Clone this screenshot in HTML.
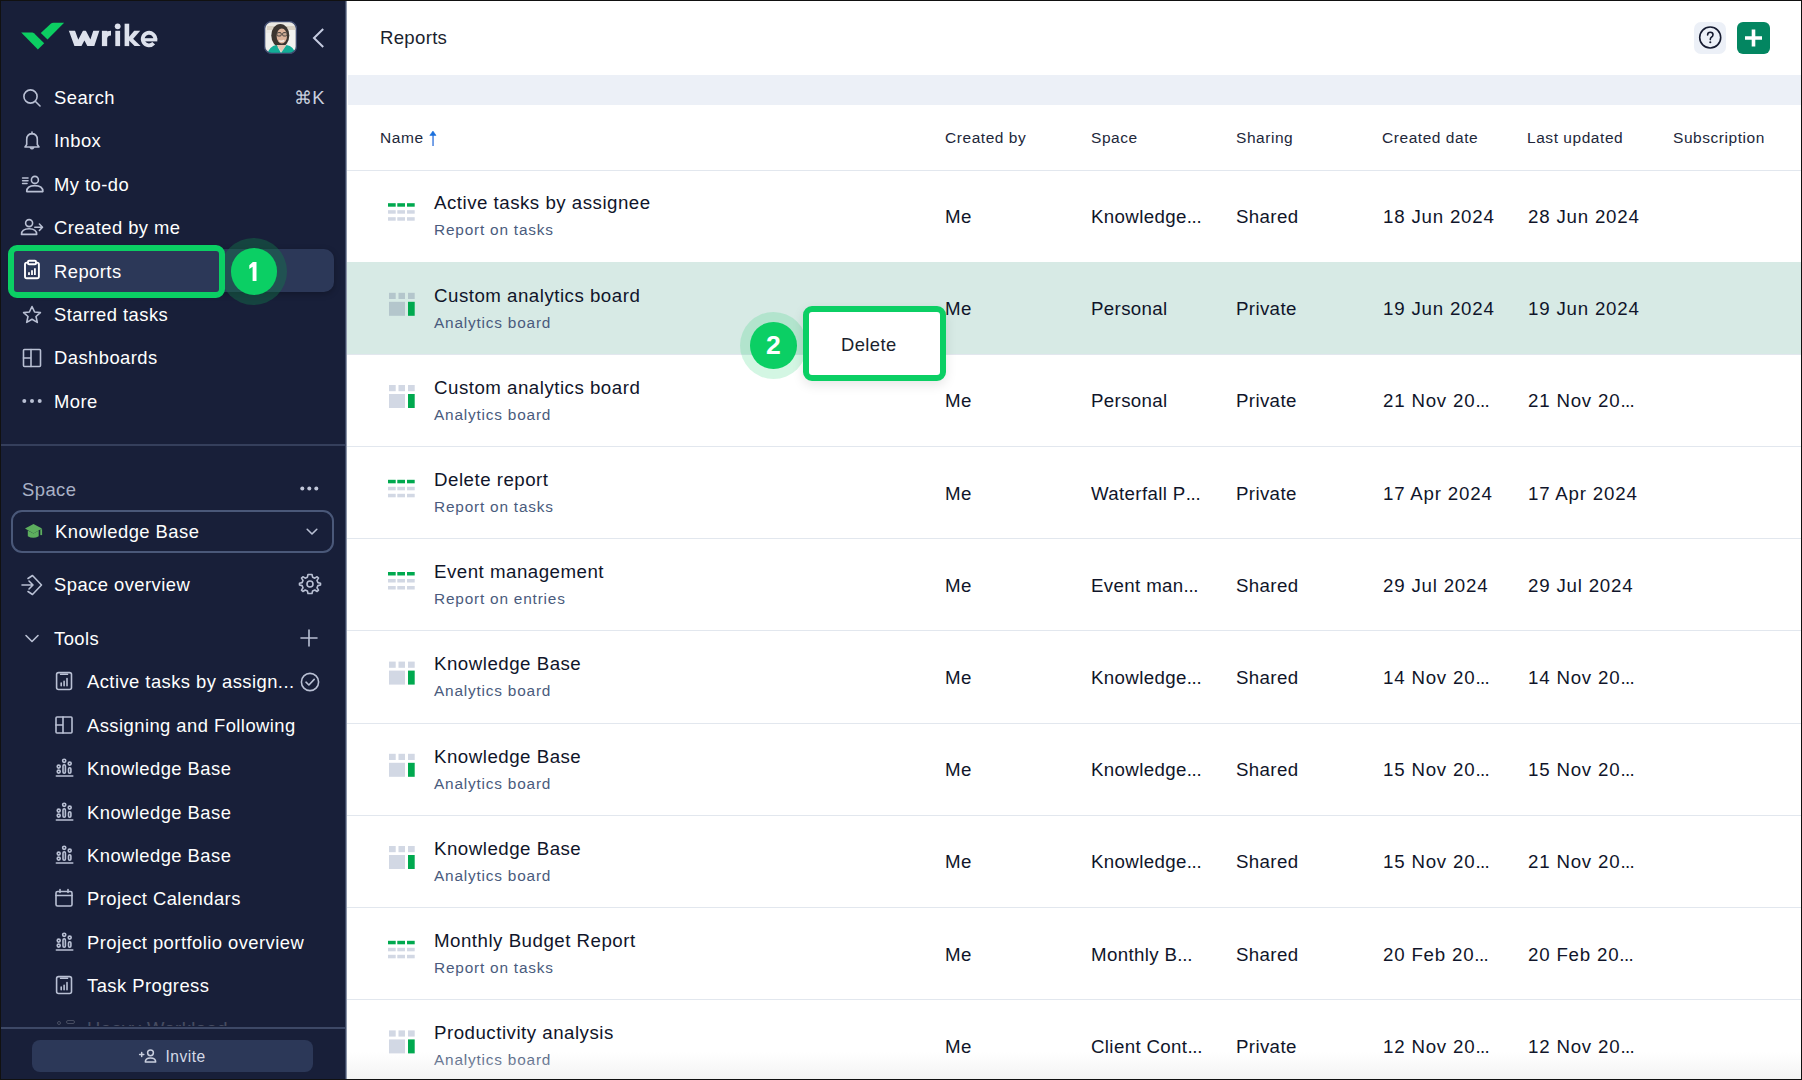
<!DOCTYPE html>
<html><head><meta charset="utf-8">
<style>
*{box-sizing:border-box;margin:0;padding:0}
html,body{width:1802px;height:1080px;overflow:hidden;background:#fff;font-family:"Liberation Sans",sans-serif}
.t{position:absolute;white-space:nowrap}
</style></head>
<body>
<div class="t" style="left:1px;top:1px;width:344px;height:1078px;background:#181f39;"></div>
<div class="t" style="left:345px;top:1px;width:1px;height:1078px;background:#3f4a66;"></div>
<div class="t" style="left:346px;top:1px;width:1px;height:1078px;background:#8d96a9;"></div>
<svg class="t" style="left:15px;top:15px;" width="150" height="45" viewBox="0 0 150 45"><path d="M6.2 17.6 L17.3 17.6 Q18.2 17.6 19 18.3 L29.2 28.2 L22.9 34.6 Z" fill="#0ccd62"/><path d="M25.8 17.9 L36 8.6 Q37 7.7 38.4 7.7 L49.1 7.7 L32.5 24.6 Z" fill="#0ccd62"/><defs><clipPath id="wc"><rect x="50" y="15.8" width="36" height="15.3"/></clipPath></defs><path clip-path="url(#wc)" d="M56.3 14 L62.8 31.8 L69.4 19.2 L76 31.8 L81.9 14" fill="none" stroke="#dde1ec" stroke-width="5.8" stroke-linejoin="miter" stroke-miterlimit="10"/><rect x="86.9" y="15.8" width="5.3" height="15.3" fill="#dde1ec"/><path d="M89.5 24 Q90 18.1 96 18.1" fill="none" stroke="#dde1ec" stroke-width="4.6"/><rect x="100.3" y="15.8" width="4.8" height="15.3" fill="#dde1ec"/><circle cx="102.7" cy="11.3" r="2.9" fill="#dde1ec"/><rect x="109.6" y="8.7" width="4.6" height="22.4" fill="#dde1ec"/><path d="M113.5 22.5 L119.2 15.8 L125.2 15.8 L116 26.3 Z" fill="#dde1ec"/><path d="M115.8 21.5 L125.6 31.1 L119.6 31.1 L113 24.6 Z" fill="#dde1ec"/><path d="M140.3 24.6 A6.3 6.3 0 1 0 138.7 28.3" fill="none" stroke="#dde1ec" stroke-width="3.8"/><rect x="129" y="23.2" width="13.3" height="3.2" fill="#dde1ec"/></svg>
<svg class="t" style="left:264px;top:21px;" width="33" height="33" viewBox="0 0 33 33"><defs><clipPath id="av"><rect x="0.5" y="0.5" width="32" height="32" rx="7"/></clipPath></defs><g clip-path="url(#av)"><rect width="33" height="33" fill="#ebe9e3"/><rect x="3" y="5" width="28" height="4" fill="#d9d1c3"/><rect x="24" y="9" width="7" height="20" fill="#f3f3f0"/><rect x="2" y="12" width="7" height="16" fill="#efefec"/><ellipse cx="16.3" cy="14.5" rx="9" ry="11.5" fill="#3b3530"/><ellipse cx="17.8" cy="15" rx="5.2" ry="7.6" fill="#dcb39b"/><rect x="12.9" y="11.6" width="4.4" height="3.4" rx="1.2" fill="#c9a892" stroke="#4a4440" stroke-width="1"/><rect x="18.6" y="11.6" width="4.4" height="3.4" rx="1.2" fill="#c9a892" stroke="#4a4440" stroke-width="1"/><path d="M15.2 19.6 Q17.8 21 20.3 19.4" stroke="#f4ece6" stroke-width="1.4" fill="none"/><path d="M12.5 24 L22.5 24 L17.5 31 Z" fill="#e6c6b3"/><path d="M3.5 34 Q4.5 25.5 12.5 24 L17 32 L22.5 24 Q30.5 25.5 31.5 34 Z" fill="#13ad97"/></g><rect x="0.6" y="0.6" width="31.8" height="31.8" rx="7" fill="none" stroke="#3e4a6e" stroke-width="1.4"/></svg>
<svg class="t" style="left:308px;top:24px;" width="20" height="28" viewBox="0 0 20 28"><path d="M15.2 5 L6 14 L15.2 23" fill="none" stroke="#c5cbe0" stroke-width="2"/></svg>
<div class="t" style="left:13px;top:249px;width:321px;height:43px;background:#2c3858;border-radius:10px;box-shadow:0 2px 6px rgba(0,0,0,0.25)"></div>
<div class="t" style="left:220.3px;top:238.1px;width:67px;height:67px;border-radius:50%;background:rgba(20,120,75,0.42)"></div>
<div class="t" style="left:230.6px;top:248.4px;width:46.4px;height:46.4px;border-radius:50%;background:#0bcf64"></div>
<svg class="t" style="left:245px;top:258px;" width="16" height="26" viewBox="0 0 16 26"><path d="M7.9 4 H11.5 V23 H7.6 V8.8 L4.3 11.1 V7.3 Z" fill="#ffffff"/></svg>
<div class="t" style="left:8px;top:245px;width:217px;height:53px;background:#2c3858;border:6px solid #0bcf64;border-radius:9px"></div>
<div class="t" style="left:54px;top:86.99px;font-size:18.4px;line-height:22.08px;color:#ffffff;letter-spacing:0.45px;font-weight:400;">Search</div>
<div class="t" style="left:54px;top:129.99px;font-size:18.4px;line-height:22.08px;color:#ffffff;letter-spacing:0.45px;font-weight:400;">Inbox</div>
<div class="t" style="left:54px;top:173.99px;font-size:18.4px;line-height:22.08px;color:#ffffff;letter-spacing:0.45px;font-weight:400;">My to-do</div>
<div class="t" style="left:54px;top:216.99px;font-size:18.4px;line-height:22.08px;color:#ffffff;letter-spacing:0.45px;font-weight:400;">Created by me</div>
<div class="t" style="left:54px;top:260.99px;font-size:18.4px;line-height:22.08px;color:#ffffff;letter-spacing:0.45px;font-weight:400;">Reports</div>
<div class="t" style="left:54px;top:303.99px;font-size:18.4px;line-height:22.08px;color:#ffffff;letter-spacing:0.45px;font-weight:400;">Starred tasks</div>
<div class="t" style="left:54px;top:346.99px;font-size:18.4px;line-height:22.08px;color:#ffffff;letter-spacing:0.45px;font-weight:400;">Dashboards</div>
<div class="t" style="left:54px;top:390.99px;font-size:18.4px;line-height:22.08px;color:#ffffff;letter-spacing:0.45px;font-weight:400;">More</div>
<div class="t" style="left:294px;top:86.99px;font-size:18.4px;line-height:22.08px;color:#c9cfdf;letter-spacing:0.2px;font-weight:400;">&#8984;K</div>
<svg class="t" style="left:20px;top:86px;" width="24" height="24" viewBox="0 0 24 24"><circle cx="10.5" cy="10.5" r="6.6" fill="none" stroke="#b9c0d4" stroke-width="1.6" stroke-linecap="round" stroke-linejoin="round"/><path d="M15.5 15.5 L20 20" fill="none" stroke="#b9c0d4" stroke-width="1.6" stroke-linecap="round" stroke-linejoin="round"/></svg>
<svg class="t" style="left:20px;top:129px;" width="24" height="24" viewBox="0 0 24 24"><path d="M5 18 H19 L17.3 15.5 V10.5 Q17.3 5 12 4.6 Q6.7 5 6.7 10.5 V15.5 Z M12 3 V4.6 M10.3 18.5 Q12 21 13.7 18.5" fill="none" stroke="#b9c0d4" stroke-width="1.6" stroke-linecap="round" stroke-linejoin="round"/></svg>
<svg class="t" style="left:20px;top:173px;" width="24" height="24" viewBox="0 0 24 24"><path d="M2.6 5 H8 M2.6 7.8 H8 M2.6 10.5 H7" fill="none" stroke="#b9c0d4" stroke-width="1.6" stroke-linecap="round" stroke-linejoin="round" stroke-width="1.7" stroke-linecap="butt"/><circle cx="14.9" cy="6.9" r="3.5" fill="none" stroke="#b9c0d4" stroke-width="1.6" stroke-linecap="round" stroke-linejoin="round"/><path d="M6.7 18.6 Q6.7 12.6 14.8 12.6 Q22.9 12.6 22.9 18.6 Z" fill="none" stroke="#b9c0d4" stroke-width="1.6" stroke-linecap="round" stroke-linejoin="round"/></svg>
<svg class="t" style="left:20px;top:216px;" width="24" height="24" viewBox="0 0 24 24"><circle cx="9.1" cy="7.1" r="3.5" fill="none" stroke="#b9c0d4" stroke-width="1.6" stroke-linecap="round" stroke-linejoin="round"/><path d="M1.5 18.4 Q1.5 12.7 9.1 12.7 Q16.7 12.7 16.7 18.4 Z" fill="none" stroke="#b9c0d4" stroke-width="1.6" stroke-linecap="round" stroke-linejoin="round"/><path d="M14.8 11.2 H22.4 M19.4 8 L22.5 11.2 L19.4 14.5" fill="none" stroke="#b9c0d4" stroke-width="1.6" stroke-linecap="round" stroke-linejoin="round" stroke-width="1.7"/></svg>
<svg class="t" style="left:20px;top:258px;" width="24" height="24" viewBox="0 0 24 24"><g fill="none" stroke="#ffffff" stroke-width="1.9" stroke-linejoin="round"><rect x="5" y="4.6" width="13.9" height="15.6" rx="1.8"/><rect x="8" y="2.8" width="8" height="3.4" rx="1" fill="#2c3858"/><path d="M9 17 V14.2 M12 17 V12.3 M14.9 17 V10.3" stroke-width="1.8"/></g></svg>
<svg class="t" style="left:20px;top:303px;" width="24" height="24" viewBox="0 0 24 24"><path d="M12 3.5 L14.6 9 L20.4 9.6 L16 13.5 L17.3 19.4 L12 16.3 L6.7 19.4 L8 13.5 L3.6 9.6 L9.4 9 Z" fill="none" stroke="#b9c0d4" stroke-width="1.6" stroke-linecap="round" stroke-linejoin="round"/></svg>
<svg class="t" style="left:20px;top:346px;" width="24" height="24" viewBox="0 0 24 24"><rect x="3.5" y="3.5" width="17" height="17" rx="1" fill="none" stroke="#b9c0d4" stroke-width="1.6" stroke-linecap="round" stroke-linejoin="round"/><path d="M11 3.5 V20.5 M3.5 12 H11" fill="none" stroke="#b9c0d4" stroke-width="1.6" stroke-linecap="round" stroke-linejoin="round"/></svg>
<svg class="t" style="left:20px;top:389px;" width="24" height="24" viewBox="0 0 24 24"><circle cx="4.3" cy="12" r="2" fill="#b9c0d4"/><circle cx="12" cy="12" r="2" fill="#b9c0d4"/><circle cx="19.7" cy="12" r="2" fill="#b9c0d4"/></svg>
<div class="t" style="left:1px;top:444px;width:344px;height:2px;background:#353f5c;"></div>
<div class="t" style="left:22px;top:478.99px;font-size:18.4px;line-height:22.08px;color:#a9b1c6;letter-spacing:0.45px;font-weight:400;">Space</div>
<svg class="t" style="left:298px;top:480px;" width="24" height="18" viewBox="0 0 24 18"><circle cx="4.3" cy="8.6" r="2" fill="#c0c6d8"/><circle cx="11.3" cy="8.6" r="2" fill="#c0c6d8"/><circle cx="18.3" cy="8.6" r="2" fill="#c0c6d8"/></svg>
<div class="t" style="left:11px;top:510px;width:323px;height:42.5px;background:transparent;border:2px solid #4a5879;border-radius:11px"></div>
<svg class="t" style="left:22px;top:519px;" width="24" height="24" viewBox="0 0 24 24"><path d="M3 9.6 L11.5 4.9 L20 9.6 L11.5 14.4 Z" fill="#5dae5e"/><path d="M5.8 11.4 L11.5 14.6 L16.7 11.5 V17.3 Q11.3 20.4 5.8 17.3 Z" fill="#5dae5e"/><rect x="18.3" y="10.2" width="1.8" height="5.9" fill="#5dae5e"/></svg>
<div class="t" style="left:55px;top:520.99px;font-size:18.4px;line-height:22.08px;color:#ffffff;letter-spacing:0.45px;font-weight:400;">Knowledge Base</div>
<svg class="t" style="left:301.5px;top:521px;" width="20" height="20" viewBox="0 0 20 20"><path d="M5.2 8.3 L10 13 L14.8 8.3" fill="none" stroke="#b9c0d4" stroke-width="1.6" stroke-linecap="round" stroke-linejoin="round" stroke-width="1.5"/></svg>
<svg class="t" style="left:19px;top:572px;" width="26" height="26" viewBox="0 0 26 26"><path d="M3 13 H14 M10 9 L14 13 L10 17" fill="none" stroke="#b9c0d4" stroke-width="1.6" stroke-linecap="round" stroke-linejoin="round"/><path d="M9 6.5 L13.5 3.5 L22.5 13 L13.5 22.5 L9 19.5" fill="none" stroke="#b9c0d4" stroke-width="1.6" stroke-linecap="round" stroke-linejoin="round"/></svg>
<div class="t" style="left:54px;top:573.99px;font-size:18.4px;line-height:22.08px;color:#ffffff;letter-spacing:0.45px;font-weight:400;">Space overview</div>
<svg class="t" style="left:298px;top:572px;" width="24" height="24" viewBox="0 0 24 24"><circle cx="12" cy="12" r="3" fill="none" stroke="#b9c0d4" stroke-width="1.6" stroke-linecap="round" stroke-linejoin="round"/><path d="M12 2.5 L14 2.5 L14.6 5.2 L16.8 6.2 L19.1 4.7 L20.5 6.1 L19 8.4 L19.9 10.6 L22.5 11.2 V13 L19.9 13.6 L19 15.8 L20.5 18.1 L19.1 19.5 L16.8 18 L14.6 18.9 L14 21.5 H10 L9.4 18.9 L7.2 18 L4.9 19.5 L3.5 18.1 L5 15.8 L4.1 13.6 L1.5 13 V11.2 L4.1 10.6 L5 8.4 L3.5 6.1 L4.9 4.7 L7.2 6.2 L9.4 5.2 L10 2.5 Z" fill="none" stroke="#b9c0d4" stroke-width="1.6" stroke-linecap="round" stroke-linejoin="round"/></svg>
<svg class="t" style="left:22px;top:628px;" width="20" height="20" viewBox="0 0 20 20"><path d="M4 7.5 L10 13.5 L16 7.5" fill="none" stroke="#b9c0d4" stroke-width="1.6" stroke-linecap="round" stroke-linejoin="round"/></svg>
<div class="t" style="left:54px;top:627.99px;font-size:18.4px;line-height:22.08px;color:#ffffff;letter-spacing:0.45px;font-weight:400;">Tools</div>
<svg class="t" style="left:298px;top:627px;" width="22" height="22" viewBox="0 0 22 22"><path d="M11 3 V19 M3 11 H19" fill="none" stroke="#b9c0d4" stroke-width="1.6" stroke-linecap="round" stroke-linejoin="round" stroke-width="1.7"/></svg>
<div class="t" style="left:87px;top:670.99px;font-size:18.4px;line-height:22.08px;color:#ffffff;letter-spacing:0.45px;font-weight:400;">Active tasks by assign...</div>
<svg class="t" style="left:53px;top:670px;" width="22" height="22" viewBox="0 0 22 22"><rect x="3.6" y="2.6" width="14.9" height="16.9" rx="2" fill="none" stroke="#b9c0d4" stroke-width="1.6" stroke-linecap="round" stroke-linejoin="round"/><rect x="6.9" y="3.4" width="8.3" height="1.7" rx="0.6" fill="#b9c0d4"/><path d="M8.2 15.8 V13 M11.1 15.8 V11.2 M14 15.8 V8.5" fill="none" stroke="#b9c0d4" stroke-width="1.6" stroke-linecap="round" stroke-linejoin="round" stroke-width="1.7" stroke-linecap="butt"/></svg>
<svg class="t" style="left:298px;top:670px;" width="24" height="24" viewBox="0 0 24 24"><circle cx="12" cy="12" r="8.6" fill="none" stroke="#b9c0d4" stroke-width="1.6" stroke-linecap="round" stroke-linejoin="round"/><path d="M8 12.2 L10.9 15 L16.2 9.4" fill="none" stroke="#b9c0d4" stroke-width="1.6" stroke-linecap="round" stroke-linejoin="round"/></svg>
<div class="t" style="left:87px;top:714.99px;font-size:18.4px;line-height:22.08px;color:#ffffff;letter-spacing:0.45px;font-weight:400;">Assigning and Following</div>
<svg class="t" style="left:53px;top:714px;" width="22" height="22" viewBox="0 0 22 22"><rect x="3" y="3" width="16" height="16" rx="1" fill="none" stroke="#b9c0d4" stroke-width="1.6" stroke-linecap="round" stroke-linejoin="round"/><path d="M10 3 V19 M3 11 H10" fill="none" stroke="#b9c0d4" stroke-width="1.6" stroke-linecap="round" stroke-linejoin="round"/></svg>
<div class="t" style="left:87px;top:757.99px;font-size:18.4px;line-height:22.08px;color:#ffffff;letter-spacing:0.45px;font-weight:400;">Knowledge Base</div>
<svg class="t" style="left:53px;top:757px;" width="22" height="22" viewBox="0 0 22 22"><g fill="none" stroke="#b9c0d4" stroke-width="1.6" stroke-linecap="round" stroke-linejoin="round" stroke-width="1.3"><circle cx="5.7" cy="9.6" r="1.5"/><circle cx="5.7" cy="14.6" r="1.5"/><circle cx="11.2" cy="3.8" r="1.6"/><rect x="10" y="7.8" width="2.4" height="8.5" rx="1.2"/><circle cx="16.7" cy="6.6" r="1.5"/><rect x="15.5" y="10.8" width="2.4" height="5.5" rx="1.2"/><path d="M3.3 19.1 H19.8" stroke-width="1.5"/></g></svg>
<div class="t" style="left:87px;top:801.99px;font-size:18.4px;line-height:22.08px;color:#ffffff;letter-spacing:0.45px;font-weight:400;">Knowledge Base</div>
<svg class="t" style="left:53px;top:801px;" width="22" height="22" viewBox="0 0 22 22"><g fill="none" stroke="#b9c0d4" stroke-width="1.6" stroke-linecap="round" stroke-linejoin="round" stroke-width="1.3"><circle cx="5.7" cy="9.6" r="1.5"/><circle cx="5.7" cy="14.6" r="1.5"/><circle cx="11.2" cy="3.8" r="1.6"/><rect x="10" y="7.8" width="2.4" height="8.5" rx="1.2"/><circle cx="16.7" cy="6.6" r="1.5"/><rect x="15.5" y="10.8" width="2.4" height="5.5" rx="1.2"/><path d="M3.3 19.1 H19.8" stroke-width="1.5"/></g></svg>
<div class="t" style="left:87px;top:844.99px;font-size:18.4px;line-height:22.08px;color:#ffffff;letter-spacing:0.45px;font-weight:400;">Knowledge Base</div>
<svg class="t" style="left:53px;top:844px;" width="22" height="22" viewBox="0 0 22 22"><g fill="none" stroke="#b9c0d4" stroke-width="1.6" stroke-linecap="round" stroke-linejoin="round" stroke-width="1.3"><circle cx="5.7" cy="9.6" r="1.5"/><circle cx="5.7" cy="14.6" r="1.5"/><circle cx="11.2" cy="3.8" r="1.6"/><rect x="10" y="7.8" width="2.4" height="8.5" rx="1.2"/><circle cx="16.7" cy="6.6" r="1.5"/><rect x="15.5" y="10.8" width="2.4" height="5.5" rx="1.2"/><path d="M3.3 19.1 H19.8" stroke-width="1.5"/></g></svg>
<div class="t" style="left:87px;top:887.99px;font-size:18.4px;line-height:22.08px;color:#ffffff;letter-spacing:0.45px;font-weight:400;">Project Calendars</div>
<svg class="t" style="left:53px;top:887px;" width="22" height="22" viewBox="0 0 22 22"><rect x="3" y="4.5" width="16" height="14.5" rx="1.5" fill="none" stroke="#b9c0d4" stroke-width="1.6" stroke-linecap="round" stroke-linejoin="round"/><path d="M3 8.5 H19 M7 2.5 V5.5 M15 2.5 V5.5" fill="none" stroke="#b9c0d4" stroke-width="1.6" stroke-linecap="round" stroke-linejoin="round"/></svg>
<div class="t" style="left:87px;top:931.99px;font-size:18.4px;line-height:22.08px;color:#ffffff;letter-spacing:0.45px;font-weight:400;">Project portfolio overview</div>
<svg class="t" style="left:53px;top:931px;" width="22" height="22" viewBox="0 0 22 22"><g fill="none" stroke="#b9c0d4" stroke-width="1.6" stroke-linecap="round" stroke-linejoin="round" stroke-width="1.3"><circle cx="5.7" cy="9.6" r="1.5"/><circle cx="5.7" cy="14.6" r="1.5"/><circle cx="11.2" cy="3.8" r="1.6"/><rect x="10" y="7.8" width="2.4" height="8.5" rx="1.2"/><circle cx="16.7" cy="6.6" r="1.5"/><rect x="15.5" y="10.8" width="2.4" height="5.5" rx="1.2"/><path d="M3.3 19.1 H19.8" stroke-width="1.5"/></g></svg>
<div class="t" style="left:87px;top:974.99px;font-size:18.4px;line-height:22.08px;color:#ffffff;letter-spacing:0.45px;font-weight:400;">Task Progress</div>
<svg class="t" style="left:53px;top:974px;" width="22" height="22" viewBox="0 0 22 22"><rect x="3.6" y="2.6" width="14.9" height="16.9" rx="2" fill="none" stroke="#b9c0d4" stroke-width="1.6" stroke-linecap="round" stroke-linejoin="round"/><rect x="6.9" y="3.4" width="8.3" height="1.7" rx="0.6" fill="#b9c0d4"/><path d="M8.2 15.8 V13 M11.1 15.8 V11.2 M14 15.8 V8.5" fill="none" stroke="#b9c0d4" stroke-width="1.6" stroke-linecap="round" stroke-linejoin="round" stroke-width="1.7" stroke-linecap="butt"/></svg>
<div class="t" style="left:1px;top:1005px;width:344px;height:20.5px;overflow:hidden;opacity:0.2"><div class="t" style="left:86px;top:13px;font-size:18.4px;color:#fff;letter-spacing:0.45px">Heavy Workload</div><div class="t" style="left:55.5px;top:15.5px;width:4px;height:4px;border-radius:50%;border:1.3px solid #fff"></div><div class="t" style="left:64.5px;top:15px;width:9px;height:4px;border-radius:2px;border:1.3px solid #fff"></div></div>
<div class="t" style="left:1px;top:1027px;width:344px;height:1.6px;background:#3d4866;"></div>
<div class="t" style="left:32px;top:1040px;width:281px;height:32px;background:#2c3858;border-radius:8px"></div>
<svg class="t" style="left:137px;top:1045px;" width="24" height="22" viewBox="0 0 24 22"><g fill="none" stroke="#c9cfde" stroke-width="1.5" stroke-linecap="round" stroke-linejoin="round"><path d="M2.6 9.5 H6.8 M4.7 7.4 V11.6"/><circle cx="13.5" cy="7.8" r="2.9"/><path d="M8.3 17 Q8.3 12.9 13.5 12.9 Q18.7 12.9 18.7 17 Z"/></g></svg>
<div class="t" style="left:165.5px;top:1047.62px;font-size:15.6px;line-height:18.72px;color:#d4d9e6;letter-spacing:0.5px;font-weight:400;">Invite</div>
<div class="t" style="left:347px;top:1px;width:1454px;height:1078px;background:#ffffff;"></div>
<div class="t" style="left:380px;top:26.87px;font-size:18.6px;line-height:22.32px;color:#1b1f2e;letter-spacing:0.3px;font-weight:400;">Reports</div>
<div class="t" style="left:1694px;top:21.5px;width:32px;height:32px;background:#ecf0f7;border-radius:7px"></div>
<svg class="t" style="left:1694px;top:21px;" width="32" height="32" viewBox="0 0 32 32"><circle cx="16.2" cy="16.5" r="10.5" fill="none" stroke="#161b30" stroke-width="1.6"/><path d="M13.6 13.9 Q13.6 11.3 16.3 11.3 Q19 11.3 19 13.8 Q19 15.3 17.4 16.2 Q16.3 16.9 16.3 18.6" fill="none" stroke="#161b30" stroke-width="1.6" stroke-linecap="round"/><circle cx="16.3" cy="21.3" r="1.05" fill="#161b30"/></svg>
<div class="t" style="left:1737px;top:22px;width:33px;height:32px;background:#038661;border-radius:6px"></div>
<svg class="t" style="left:1737px;top:22px;" width="33" height="32" viewBox="0 0 33 32"><path d="M16.5 7.5 V24.5 M8 16 H25" fill="none" stroke="#fff" stroke-width="3.6"/></svg>
<div class="t" style="left:348px;top:75px;width:1453px;height:30px;background:#ecf0f7;"></div>
<div class="t" style="left:380px;top:129.28px;font-size:15.5px;line-height:18.6px;color:#22273a;letter-spacing:0.55px;font-weight:400;">Name</div>
<svg class="t" style="left:427px;top:127px;" width="12" height="20" viewBox="0 0 12 20"><rect x="5.1" y="7" width="1.9" height="12" fill="#6f9de6"/><path d="M2.8 8.4 L9 8.4 L5.95 4.1 Z" fill="#1a6fdc" stroke="#1a6fdc" stroke-width="0.6" stroke-linejoin="round"/></svg>
<div class="t" style="left:945px;top:129.28px;font-size:15.5px;line-height:18.6px;color:#22273a;letter-spacing:0.55px;font-weight:400;">Created by</div>
<div class="t" style="left:1091px;top:129.28px;font-size:15.5px;line-height:18.6px;color:#22273a;letter-spacing:0.55px;font-weight:400;">Space</div>
<div class="t" style="left:1236px;top:129.28px;font-size:15.5px;line-height:18.6px;color:#22273a;letter-spacing:0.55px;font-weight:400;">Sharing</div>
<div class="t" style="left:1382px;top:129.28px;font-size:15.5px;line-height:18.6px;color:#22273a;letter-spacing:0.55px;font-weight:400;">Created date</div>
<div class="t" style="left:1527px;top:129.28px;font-size:15.5px;line-height:18.6px;color:#22273a;letter-spacing:0.55px;font-weight:400;">Last updated</div>
<div class="t" style="left:1673px;top:129.28px;font-size:15.5px;line-height:18.6px;color:#22273a;letter-spacing:0.55px;font-weight:400;">Subscription</div>
<div class="t" style="left:347px;top:170px;width:1454px;height:1px;background:#e2e7ee;"></div>
<div class="t" style="left:347px;top:262px;width:1454px;height:1px;background:#e2e7ee;"></div>
<div class="t" style="left:434px;top:192.42px;font-size:18.7px;line-height:22.44px;color:#10152a;letter-spacing:0.5px;font-weight:400;">Active tasks by assignee</div>
<div class="t" style="left:434px;top:221.34px;font-size:15.4px;line-height:18.48px;color:#4a5b7d;letter-spacing:0.8px;font-weight:400;">Report on tasks</div>
<div class="t" style="left:945px;top:205.92px;font-size:18.7px;line-height:22.44px;color:#10152a;letter-spacing:0.36px;font-weight:400;">Me</div>
<div class="t" style="left:1091px;top:205.92px;font-size:18.7px;line-height:22.44px;color:#10152a;letter-spacing:0.36px;font-weight:400;">Knowledge<span style="letter-spacing:-0.3px">...</span></div>
<div class="t" style="left:1236px;top:205.92px;font-size:18.7px;line-height:22.44px;color:#10152a;letter-spacing:0.36px;font-weight:400;">Shared</div>
<div class="t" style="left:1383px;top:205.92px;font-size:18.7px;line-height:22.44px;color:#10152a;letter-spacing:0.8px;font-weight:400;">18 Jun 2024</div>
<div class="t" style="left:1528px;top:205.92px;font-size:18.7px;line-height:22.44px;color:#10152a;letter-spacing:0.8px;font-weight:400;">28 Jun 2024</div>
<svg class="t" style="left:386px;top:198px;" width="32" height="28" viewBox="0 0 32 28"><rect x="2.00" y="5.20" width="7.7" height="3.5" fill="#00a94f"/><rect x="2.00" y="12.20" width="7.7" height="3.5" fill="#d2d8e4"/><rect x="2.00" y="19.20" width="7.7" height="3.5" fill="#d2d8e4"/><rect x="11.30" y="5.20" width="7.7" height="3.5" fill="#00a94f"/><rect x="11.30" y="12.20" width="7.7" height="3.5" fill="#d2d8e4"/><rect x="11.30" y="19.20" width="7.7" height="3.5" fill="#d2d8e4"/><rect x="21.00" y="5.20" width="7.7" height="3.5" fill="#00a94f"/><rect x="21.00" y="12.20" width="7.7" height="3.5" fill="#d2d8e4"/><rect x="21.00" y="19.20" width="7.7" height="3.5" fill="#d2d8e4"/></svg>
<div class="t" style="left:347px;top:262px;width:1454px;height:92px;background:#d7eae5;"></div>
<div class="t" style="left:347px;top:354px;width:1454px;height:1px;background:#e2e7ee;"></div>
<div class="t" style="left:434px;top:284.62px;font-size:18.7px;line-height:22.44px;color:#10152a;letter-spacing:0.5px;font-weight:400;">Custom analytics board</div>
<div class="t" style="left:434px;top:313.54px;font-size:15.4px;line-height:18.48px;color:#4a5b7d;letter-spacing:0.8px;font-weight:400;">Analytics board</div>
<div class="t" style="left:945px;top:298.12px;font-size:18.7px;line-height:22.44px;color:#10152a;letter-spacing:0.36px;font-weight:400;">Me</div>
<div class="t" style="left:1091px;top:298.12px;font-size:18.7px;line-height:22.44px;color:#10152a;letter-spacing:0.36px;font-weight:400;">Personal</div>
<div class="t" style="left:1236px;top:298.12px;font-size:18.7px;line-height:22.44px;color:#10152a;letter-spacing:0.36px;font-weight:400;">Private</div>
<div class="t" style="left:1383px;top:298.12px;font-size:18.7px;line-height:22.44px;color:#10152a;letter-spacing:0.8px;font-weight:400;">19 Jun 2024</div>
<div class="t" style="left:1528px;top:298.12px;font-size:18.7px;line-height:22.44px;color:#10152a;letter-spacing:0.8px;font-weight:400;">19 Jun 2024</div>
<svg class="t" style="left:386px;top:290px;" width="32" height="28" viewBox="0 0 32 28"><rect x="3" y="2.80" width="6.7" height="6.2" fill="#b4c6cc"/><rect x="12.5" y="2.80" width="6.5" height="6.2" fill="#b4c6cc"/><rect x="22" y="2.80" width="6.7" height="6.2" fill="#b4c6cc"/><rect x="3" y="11.80" width="16" height="14" fill="#b4c6cc"/><rect x="22" y="11.80" width="6.7" height="14" fill="#00a94f"/></svg>
<div class="t" style="left:347px;top:446px;width:1454px;height:1px;background:#e2e7ee;"></div>
<div class="t" style="left:434px;top:376.82px;font-size:18.7px;line-height:22.44px;color:#10152a;letter-spacing:0.5px;font-weight:400;">Custom analytics board</div>
<div class="t" style="left:434px;top:405.74px;font-size:15.4px;line-height:18.48px;color:#4a5b7d;letter-spacing:0.8px;font-weight:400;">Analytics board</div>
<div class="t" style="left:945px;top:390.32px;font-size:18.7px;line-height:22.44px;color:#10152a;letter-spacing:0.36px;font-weight:400;">Me</div>
<div class="t" style="left:1091px;top:390.32px;font-size:18.7px;line-height:22.44px;color:#10152a;letter-spacing:0.36px;font-weight:400;">Personal</div>
<div class="t" style="left:1236px;top:390.32px;font-size:18.7px;line-height:22.44px;color:#10152a;letter-spacing:0.36px;font-weight:400;">Private</div>
<div class="t" style="left:1383px;top:390.32px;font-size:18.7px;line-height:22.44px;color:#10152a;letter-spacing:0.8px;font-weight:400;">21 Nov 20<span style="letter-spacing:-0.6px">...</span></div>
<div class="t" style="left:1528px;top:390.32px;font-size:18.7px;line-height:22.44px;color:#10152a;letter-spacing:0.8px;font-weight:400;">21 Nov 20<span style="letter-spacing:-0.6px">...</span></div>
<svg class="t" style="left:386px;top:382px;" width="32" height="28" viewBox="0 0 32 28"><rect x="3" y="3.00" width="6.7" height="6.2" fill="#d2d8e4"/><rect x="12.5" y="3.00" width="6.5" height="6.2" fill="#d2d8e4"/><rect x="22" y="3.00" width="6.7" height="6.2" fill="#d2d8e4"/><rect x="3" y="12.00" width="16" height="14" fill="#d2d8e4"/><rect x="22" y="12.00" width="6.7" height="14" fill="#00a94f"/></svg>
<div class="t" style="left:347px;top:538px;width:1454px;height:1px;background:#e2e7ee;"></div>
<div class="t" style="left:434px;top:469.02px;font-size:18.7px;line-height:22.44px;color:#10152a;letter-spacing:0.5px;font-weight:400;">Delete report</div>
<div class="t" style="left:434px;top:497.94px;font-size:15.4px;line-height:18.48px;color:#4a5b7d;letter-spacing:0.8px;font-weight:400;">Report on tasks</div>
<div class="t" style="left:945px;top:482.52px;font-size:18.7px;line-height:22.44px;color:#10152a;letter-spacing:0.36px;font-weight:400;">Me</div>
<div class="t" style="left:1091px;top:482.52px;font-size:18.7px;line-height:22.44px;color:#10152a;letter-spacing:0.36px;font-weight:400;">Waterfall P<span style="letter-spacing:-0.3px">...</span></div>
<div class="t" style="left:1236px;top:482.52px;font-size:18.7px;line-height:22.44px;color:#10152a;letter-spacing:0.36px;font-weight:400;">Private</div>
<div class="t" style="left:1383px;top:482.52px;font-size:18.7px;line-height:22.44px;color:#10152a;letter-spacing:0.8px;font-weight:400;">17 Apr 2024</div>
<div class="t" style="left:1528px;top:482.52px;font-size:18.7px;line-height:22.44px;color:#10152a;letter-spacing:0.8px;font-weight:400;">17 Apr 2024</div>
<svg class="t" style="left:386px;top:474px;" width="32" height="28" viewBox="0 0 32 28"><rect x="2.00" y="5.80" width="7.7" height="3.5" fill="#00a94f"/><rect x="2.00" y="12.80" width="7.7" height="3.5" fill="#d2d8e4"/><rect x="2.00" y="19.80" width="7.7" height="3.5" fill="#d2d8e4"/><rect x="11.30" y="5.80" width="7.7" height="3.5" fill="#00a94f"/><rect x="11.30" y="12.80" width="7.7" height="3.5" fill="#d2d8e4"/><rect x="11.30" y="19.80" width="7.7" height="3.5" fill="#d2d8e4"/><rect x="21.00" y="5.80" width="7.7" height="3.5" fill="#00a94f"/><rect x="21.00" y="12.80" width="7.7" height="3.5" fill="#d2d8e4"/><rect x="21.00" y="19.80" width="7.7" height="3.5" fill="#d2d8e4"/></svg>
<div class="t" style="left:347px;top:630px;width:1454px;height:1px;background:#e2e7ee;"></div>
<div class="t" style="left:434px;top:561.22px;font-size:18.7px;line-height:22.44px;color:#10152a;letter-spacing:0.5px;font-weight:400;">Event management</div>
<div class="t" style="left:434px;top:590.14px;font-size:15.4px;line-height:18.48px;color:#4a5b7d;letter-spacing:0.8px;font-weight:400;">Report on entries</div>
<div class="t" style="left:945px;top:574.72px;font-size:18.7px;line-height:22.44px;color:#10152a;letter-spacing:0.36px;font-weight:400;">Me</div>
<div class="t" style="left:1091px;top:574.72px;font-size:18.7px;line-height:22.44px;color:#10152a;letter-spacing:0.36px;font-weight:400;">Event man<span style="letter-spacing:-0.3px">...</span></div>
<div class="t" style="left:1236px;top:574.72px;font-size:18.7px;line-height:22.44px;color:#10152a;letter-spacing:0.36px;font-weight:400;">Shared</div>
<div class="t" style="left:1383px;top:574.72px;font-size:18.7px;line-height:22.44px;color:#10152a;letter-spacing:0.8px;font-weight:400;">29 Jul 2024</div>
<div class="t" style="left:1528px;top:574.72px;font-size:18.7px;line-height:22.44px;color:#10152a;letter-spacing:0.8px;font-weight:400;">29 Jul 2024</div>
<svg class="t" style="left:386px;top:566px;" width="32" height="28" viewBox="0 0 32 28"><rect x="2.00" y="6.00" width="7.7" height="3.5" fill="#00a94f"/><rect x="2.00" y="13.00" width="7.7" height="3.5" fill="#d2d8e4"/><rect x="2.00" y="20.00" width="7.7" height="3.5" fill="#d2d8e4"/><rect x="11.30" y="6.00" width="7.7" height="3.5" fill="#00a94f"/><rect x="11.30" y="13.00" width="7.7" height="3.5" fill="#d2d8e4"/><rect x="11.30" y="20.00" width="7.7" height="3.5" fill="#d2d8e4"/><rect x="21.00" y="6.00" width="7.7" height="3.5" fill="#00a94f"/><rect x="21.00" y="13.00" width="7.7" height="3.5" fill="#d2d8e4"/><rect x="21.00" y="20.00" width="7.7" height="3.5" fill="#d2d8e4"/></svg>
<div class="t" style="left:347px;top:723px;width:1454px;height:1px;background:#e2e7ee;"></div>
<div class="t" style="left:434px;top:653.42px;font-size:18.7px;line-height:22.44px;color:#10152a;letter-spacing:0.5px;font-weight:400;">Knowledge Base</div>
<div class="t" style="left:434px;top:682.34px;font-size:15.4px;line-height:18.48px;color:#4a5b7d;letter-spacing:0.8px;font-weight:400;">Analytics board</div>
<div class="t" style="left:945px;top:666.92px;font-size:18.7px;line-height:22.44px;color:#10152a;letter-spacing:0.36px;font-weight:400;">Me</div>
<div class="t" style="left:1091px;top:666.92px;font-size:18.7px;line-height:22.44px;color:#10152a;letter-spacing:0.36px;font-weight:400;">Knowledge<span style="letter-spacing:-0.3px">...</span></div>
<div class="t" style="left:1236px;top:666.92px;font-size:18.7px;line-height:22.44px;color:#10152a;letter-spacing:0.36px;font-weight:400;">Shared</div>
<div class="t" style="left:1383px;top:666.92px;font-size:18.7px;line-height:22.44px;color:#10152a;letter-spacing:0.8px;font-weight:400;">14 Nov 20<span style="letter-spacing:-0.6px">...</span></div>
<div class="t" style="left:1528px;top:666.92px;font-size:18.7px;line-height:22.44px;color:#10152a;letter-spacing:0.8px;font-weight:400;">14 Nov 20<span style="letter-spacing:-0.6px">...</span></div>
<svg class="t" style="left:386px;top:659px;" width="32" height="28" viewBox="0 0 32 28"><rect x="3" y="2.60" width="6.7" height="6.2" fill="#d2d8e4"/><rect x="12.5" y="2.60" width="6.5" height="6.2" fill="#d2d8e4"/><rect x="22" y="2.60" width="6.7" height="6.2" fill="#d2d8e4"/><rect x="3" y="11.60" width="16" height="14" fill="#d2d8e4"/><rect x="22" y="11.60" width="6.7" height="14" fill="#00a94f"/></svg>
<div class="t" style="left:347px;top:815px;width:1454px;height:1px;background:#e2e7ee;"></div>
<div class="t" style="left:434px;top:745.62px;font-size:18.7px;line-height:22.44px;color:#10152a;letter-spacing:0.5px;font-weight:400;">Knowledge Base</div>
<div class="t" style="left:434px;top:774.54px;font-size:15.4px;line-height:18.48px;color:#4a5b7d;letter-spacing:0.8px;font-weight:400;">Analytics board</div>
<div class="t" style="left:945px;top:759.12px;font-size:18.7px;line-height:22.44px;color:#10152a;letter-spacing:0.36px;font-weight:400;">Me</div>
<div class="t" style="left:1091px;top:759.12px;font-size:18.7px;line-height:22.44px;color:#10152a;letter-spacing:0.36px;font-weight:400;">Knowledge<span style="letter-spacing:-0.3px">...</span></div>
<div class="t" style="left:1236px;top:759.12px;font-size:18.7px;line-height:22.44px;color:#10152a;letter-spacing:0.36px;font-weight:400;">Shared</div>
<div class="t" style="left:1383px;top:759.12px;font-size:18.7px;line-height:22.44px;color:#10152a;letter-spacing:0.8px;font-weight:400;">15 Nov 20<span style="letter-spacing:-0.6px">...</span></div>
<div class="t" style="left:1528px;top:759.12px;font-size:18.7px;line-height:22.44px;color:#10152a;letter-spacing:0.8px;font-weight:400;">15 Nov 20<span style="letter-spacing:-0.6px">...</span></div>
<svg class="t" style="left:386px;top:751px;" width="32" height="28" viewBox="0 0 32 28"><rect x="3" y="2.80" width="6.7" height="6.2" fill="#d2d8e4"/><rect x="12.5" y="2.80" width="6.5" height="6.2" fill="#d2d8e4"/><rect x="22" y="2.80" width="6.7" height="6.2" fill="#d2d8e4"/><rect x="3" y="11.80" width="16" height="14" fill="#d2d8e4"/><rect x="22" y="11.80" width="6.7" height="14" fill="#00a94f"/></svg>
<div class="t" style="left:347px;top:907px;width:1454px;height:1px;background:#e2e7ee;"></div>
<div class="t" style="left:434px;top:837.82px;font-size:18.7px;line-height:22.44px;color:#10152a;letter-spacing:0.5px;font-weight:400;">Knowledge Base</div>
<div class="t" style="left:434px;top:866.74px;font-size:15.4px;line-height:18.48px;color:#4a5b7d;letter-spacing:0.8px;font-weight:400;">Analytics board</div>
<div class="t" style="left:945px;top:851.32px;font-size:18.7px;line-height:22.44px;color:#10152a;letter-spacing:0.36px;font-weight:400;">Me</div>
<div class="t" style="left:1091px;top:851.32px;font-size:18.7px;line-height:22.44px;color:#10152a;letter-spacing:0.36px;font-weight:400;">Knowledge<span style="letter-spacing:-0.3px">...</span></div>
<div class="t" style="left:1236px;top:851.32px;font-size:18.7px;line-height:22.44px;color:#10152a;letter-spacing:0.36px;font-weight:400;">Shared</div>
<div class="t" style="left:1383px;top:851.32px;font-size:18.7px;line-height:22.44px;color:#10152a;letter-spacing:0.8px;font-weight:400;">15 Nov 20<span style="letter-spacing:-0.6px">...</span></div>
<div class="t" style="left:1528px;top:851.32px;font-size:18.7px;line-height:22.44px;color:#10152a;letter-spacing:0.8px;font-weight:400;">21 Nov 20<span style="letter-spacing:-0.6px">...</span></div>
<svg class="t" style="left:386px;top:843px;" width="32" height="28" viewBox="0 0 32 28"><rect x="3" y="3.00" width="6.7" height="6.2" fill="#d2d8e4"/><rect x="12.5" y="3.00" width="6.5" height="6.2" fill="#d2d8e4"/><rect x="22" y="3.00" width="6.7" height="6.2" fill="#d2d8e4"/><rect x="3" y="12.00" width="16" height="14" fill="#d2d8e4"/><rect x="22" y="12.00" width="6.7" height="14" fill="#00a94f"/></svg>
<div class="t" style="left:347px;top:999px;width:1454px;height:1px;background:#e2e7ee;"></div>
<div class="t" style="left:434px;top:930.02px;font-size:18.7px;line-height:22.44px;color:#10152a;letter-spacing:0.5px;font-weight:400;">Monthly Budget Report</div>
<div class="t" style="left:434px;top:958.94px;font-size:15.4px;line-height:18.48px;color:#4a5b7d;letter-spacing:0.8px;font-weight:400;">Report on tasks</div>
<div class="t" style="left:945px;top:943.52px;font-size:18.7px;line-height:22.44px;color:#10152a;letter-spacing:0.36px;font-weight:400;">Me</div>
<div class="t" style="left:1091px;top:943.52px;font-size:18.7px;line-height:22.44px;color:#10152a;letter-spacing:0.36px;font-weight:400;">Monthly B<span style="letter-spacing:-0.3px">...</span></div>
<div class="t" style="left:1236px;top:943.52px;font-size:18.7px;line-height:22.44px;color:#10152a;letter-spacing:0.36px;font-weight:400;">Shared</div>
<div class="t" style="left:1383px;top:943.52px;font-size:18.7px;line-height:22.44px;color:#10152a;letter-spacing:0.8px;font-weight:400;">20 Feb 20<span style="letter-spacing:-0.6px">...</span></div>
<div class="t" style="left:1528px;top:943.52px;font-size:18.7px;line-height:22.44px;color:#10152a;letter-spacing:0.8px;font-weight:400;">20 Feb 20<span style="letter-spacing:-0.6px">...</span></div>
<svg class="t" style="left:386px;top:935px;" width="32" height="28" viewBox="0 0 32 28"><rect x="2.00" y="5.80" width="7.7" height="3.5" fill="#00a94f"/><rect x="2.00" y="12.80" width="7.7" height="3.5" fill="#d2d8e4"/><rect x="2.00" y="19.80" width="7.7" height="3.5" fill="#d2d8e4"/><rect x="11.30" y="5.80" width="7.7" height="3.5" fill="#00a94f"/><rect x="11.30" y="12.80" width="7.7" height="3.5" fill="#d2d8e4"/><rect x="11.30" y="19.80" width="7.7" height="3.5" fill="#d2d8e4"/><rect x="21.00" y="5.80" width="7.7" height="3.5" fill="#00a94f"/><rect x="21.00" y="12.80" width="7.7" height="3.5" fill="#d2d8e4"/><rect x="21.00" y="19.80" width="7.7" height="3.5" fill="#d2d8e4"/></svg>
<div class="t" style="left:347px;top:1091px;width:1454px;height:1px;background:#e2e7ee;"></div>
<div class="t" style="left:434px;top:1022.22px;font-size:18.7px;line-height:22.44px;color:#10152a;letter-spacing:0.5px;font-weight:400;">Productivity analysis</div>
<div class="t" style="left:434px;top:1051.14px;font-size:15.4px;line-height:18.48px;color:#4a5b7d;letter-spacing:0.8px;font-weight:400;">Analytics board</div>
<div class="t" style="left:945px;top:1035.72px;font-size:18.7px;line-height:22.44px;color:#10152a;letter-spacing:0.36px;font-weight:400;">Me</div>
<div class="t" style="left:1091px;top:1035.72px;font-size:18.7px;line-height:22.44px;color:#10152a;letter-spacing:0.36px;font-weight:400;">Client Cont<span style="letter-spacing:-0.3px">...</span></div>
<div class="t" style="left:1236px;top:1035.72px;font-size:18.7px;line-height:22.44px;color:#10152a;letter-spacing:0.36px;font-weight:400;">Private</div>
<div class="t" style="left:1383px;top:1035.72px;font-size:18.7px;line-height:22.44px;color:#10152a;letter-spacing:0.8px;font-weight:400;">12 Nov 20<span style="letter-spacing:-0.6px">...</span></div>
<div class="t" style="left:1528px;top:1035.72px;font-size:18.7px;line-height:22.44px;color:#10152a;letter-spacing:0.8px;font-weight:400;">12 Nov 20<span style="letter-spacing:-0.6px">...</span></div>
<svg class="t" style="left:386px;top:1027px;" width="32" height="28" viewBox="0 0 32 28"><rect x="3" y="3.40" width="6.7" height="6.2" fill="#d2d8e4"/><rect x="12.5" y="3.40" width="6.5" height="6.2" fill="#d2d8e4"/><rect x="22" y="3.40" width="6.7" height="6.2" fill="#d2d8e4"/><rect x="3" y="12.40" width="16" height="14" fill="#d2d8e4"/><rect x="22" y="12.40" width="6.7" height="14" fill="#00a94f"/></svg>
<div class="t" style="left:347px;top:1052px;width:1454px;height:27px;background:linear-gradient(rgba(255,255,255,0),rgba(236,236,236,0.6))"></div>
<div class="t" style="left:740px;top:312px;width:67px;height:67px;border-radius:50%;background:rgba(11,207,100,0.18)"></div>
<div class="t" style="left:750.2px;top:322.2px;width:46.6px;height:46.6px;border-radius:50%;background:#0bcf64"></div>
<div class="t" style="left:766px;top:329.58px;font-size:26.5px;line-height:31.8px;color:#ffffff;letter-spacing:0px;font-weight:700;">2</div>
<div class="t" style="left:803px;top:306px;width:143px;height:75px;background:#ffffff;border:6px solid #0bcf64;border-radius:9px;box-shadow:0 4px 12px rgba(0,0,0,0.10)"></div>
<div class="t" style="left:841px;top:333.99px;font-size:18.4px;line-height:22.08px;color:#1b1f2e;letter-spacing:0.4px;font-weight:400;">Delete</div>
<div class="t" style="left:0px;top:0px;width:1802px;height:1px;background:#111111;"></div>
<div class="t" style="left:0px;top:0px;width:1px;height:1080px;background:#111111;"></div>
<div class="t" style="left:1801px;top:0px;width:1px;height:1080px;background:#111111;"></div>
<div class="t" style="left:0px;top:1079px;width:1802px;height:1px;background:#111111;"></div>
</body></html>
